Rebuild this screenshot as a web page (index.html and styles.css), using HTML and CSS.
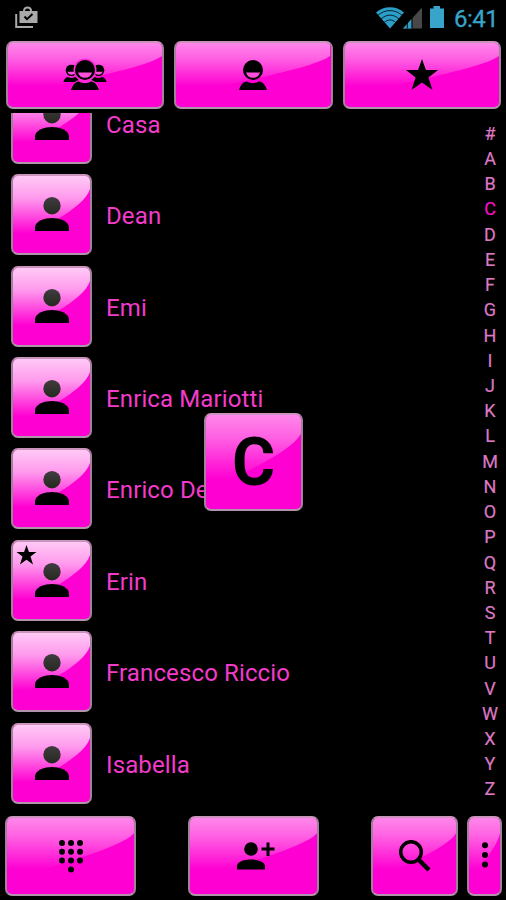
FILE: index.html
```html
<!DOCTYPE html>
<html lang="en">
<head>
<meta charset="utf-8">
<title>Contacts</title>
<link rel="stylesheet" href="styles.css">
</head>
<body>
<svg class="defs" aria-hidden="true">
  <defs>
    <linearGradient id="sheen" x1="0" y1="0" x2="0" y2="1">
      <stop offset="0" stop-color="#fff" stop-opacity=".53"/>
      <stop offset=".3" stop-color="#fff" stop-opacity=".38"/>
      <stop offset=".85" stop-color="#fff" stop-opacity="0"/>
    </linearGradient>
    <linearGradient id="sheen-strong" x1="0" y1="0" x2="0" y2="1">
      <stop offset="0" stop-color="#fff" stop-opacity=".79"/>
      <stop offset=".35" stop-color="#fff" stop-opacity=".6"/>
      <stop offset=".9" stop-color="#fff" stop-opacity="0"/>
    </linearGradient>
    <linearGradient id="head" x1="0" y1="0" x2="0" y2="1">
      <stop offset="0" stop-color="#403c3f"/>
      <stop offset="1" stop-color="#25291f"/>
    </linearGradient>
  </defs>
  <symbol id="gloss" viewBox="0 0 100 100" preserveAspectRatio="none">
    <path fill="url(#sheen)" d="M0 0H100V20C94 31 76 42 60 51C40 62 20 73 0 80Z"/>
  </symbol>
  <symbol id="gloss-strong" viewBox="0 0 100 100" preserveAspectRatio="none">
    <path fill="url(#sheen-strong)" d="M0 0H100V17C96 30 79 43 60 55C40 67 20 76 0 83Z"/>
  </symbol>
  <symbol id="person" viewBox="0 0 34 34">
    <circle cx="17" cy="8.700" r="8.700" fill="url(#head)"/>
    <path d="M0 34V30.500C0 24 10 21 17 21S34 24 34 30.500V34Z"/>
  </symbol>
  <symbol id="star" viewBox="0 0 32 32">
    <path d="M16 0L19.900 11H32L22.400 18.500L26.500 31L16 23.500L5.500 31L9.600 18.500L0 11H12.100Z"/>
  </symbol>
  <symbol id="face" viewBox="0 0 28 31">
    <circle cx="14" cy="10" r="10"/>
    <path class="smile" d="M7 12.500H21C20 16 17.500 17.700 14 17.700S8 16 7 12.500Z"/>
    <path d="M0 30C1.500 25 4 22 8 21.500C11.500 23.700 16.500 23.700 20 21.500C24 22 26.500 25 28 30Z"/>
  </symbol>
</svg>

<div class="screen">
  <header class="status">
    <svg class="status-bag" viewBox="0 0 23 23">
      <path fill="none" stroke="#a9a9a9" stroke-width="2" d="M1.200 8V21H18M9 5C9 .2 16 .2 16 5"/>
      <path fill="#a9a9a9" d="M4.500 5H22.500V17H4.500Z"/>
      <path fill="none" stroke="#000" stroke-width="2" d="M9.500 10.500L12 13.200L17.500 8"/>
    </svg>
    <div class="status-right">
      <svg class="wifi" viewBox="0 0 28 22">
        <path fill="#2b9fc8" d="M0 5.500C8-1.500 20-1.500 28 5.500L14 21.500Z"/>
        <g fill="none" stroke="#00131c" stroke-width=".9"><path d="M2 8.300C9 2 19 2 26 8.300M5 12C11 6.800 17 6.800 23 12M8 15.700C12 12 16 12 20 15.700"/></g>
      </svg>
      <svg class="signal" viewBox="0 0 20 22">
        <path fill="#484848" d="M20 0V22H0Z"/>
        <path fill="#2b9fc8" d="M9 12.100V22H0Z"/>
        <path stroke="#000" d="M4.500 14V22M9.500 8V22"/>
      </svg>
      <svg class="battery" viewBox="0 0 16 22"><path fill="#38a4ca" d="M1 2.500H4.500V0H11V2.500H15V22H1Z"/></svg>
      <span class="clock">6:41</span>
    </div>
  </header>

  <nav class="tabs">
    <button class="key" aria-label="Groups"><svg class="gloss"><use href="#gloss"/></svg>
      <svg class="icon-group" viewBox="0 0 42 31">
        <use href="#face" x="-1" y="4.500" width="17" height="18"/>
        <use href="#face" x="26" y="4.500" width="17" height="18"/>
        <circle class="halo" cx="21" cy="10" r="10"/>
        <path class="halo" d="M9 27C10.500 24 12 22.500 15 21.500H27C30 22.500 31.500 24 33 27Z"/>
        <use href="#face" x="7" y="0" width="28" height="31"/>
      </svg>
    </button>
    <button class="key" aria-label="Contacts"><svg class="gloss"><use href="#gloss"/></svg><svg class="icon-face"><use href="#face"/></svg></button>
    <button class="key" aria-label="Favorites"><svg class="gloss"><use href="#gloss"/></svg><svg class="icon-star"><use href="#star"/></svg></button>
  </nav>

  <main class="content">
    <ul class="list">
      <li class="row"><span class="key thumb"><svg class="gloss"><use href="#gloss-strong"/></svg><svg class="person"><use href="#person"/></svg></span><span class="name">Casa</span></li>
      <li class="row"><span class="key thumb"><svg class="gloss"><use href="#gloss-strong"/></svg><svg class="person"><use href="#person"/></svg></span><span class="name">Dean</span></li>
      <li class="row"><span class="key thumb"><svg class="gloss"><use href="#gloss-strong"/></svg><svg class="person"><use href="#person"/></svg></span><span class="name">Emi</span></li>
      <li class="row"><span class="key thumb"><svg class="gloss"><use href="#gloss-strong"/></svg><svg class="person"><use href="#person"/></svg></span><span class="name">Enrica Mariotti</span></li>
      <li class="row"><span class="key thumb"><svg class="gloss"><use href="#gloss-strong"/></svg><svg class="person"><use href="#person"/></svg></span><span class="name">Enrico De</span></li>
      <li class="row"><span class="key thumb"><svg class="gloss"><use href="#gloss-strong"/></svg><svg class="person"><use href="#person"/></svg><svg class="badge"><use href="#star"/></svg></span><span class="name">Erin</span></li>
      <li class="row"><span class="key thumb"><svg class="gloss"><use href="#gloss-strong"/></svg><svg class="person"><use href="#person"/></svg></span><span class="name">Francesco Riccio</span></li>
      <li class="row"><span class="key thumb"><svg class="gloss"><use href="#gloss-strong"/></svg><svg class="person"><use href="#person"/></svg></span><span class="name">Isabella</span></li>
    </ul>
    <div class="index">
      <span>#</span><span>A</span><span>B</span><span class="current">C</span><span>D</span><span>E</span><span>F</span><span>G</span><span>H</span><span>I</span><span>J</span><span>K</span><span>L</span><span>M</span><span>N</span><span>O</span><span>P</span><span>Q</span><span>R</span><span>S</span><span>T</span><span>U</span><span>V</span><span>W</span><span>X</span><span>Y</span><span>Z</span>
    </div>
    <div class="key popup"><svg class="gloss"><use href="#gloss"/></svg><span class="letter">C</span></div>
  </main>

  <footer class="actions">
    <button class="key wide" aria-label="Dial pad"><svg class="gloss"><use href="#gloss"/></svg>
      <svg class="icon-dial" viewBox="0 0 26 34">
        <circle cx="4" cy="4" r="3"/><circle cx="13" cy="4" r="3"/><circle cx="22" cy="4" r="3"/>
        <circle cx="4" cy="12.800" r="3"/><circle cx="13" cy="12.800" r="3"/><circle cx="22" cy="12.800" r="3"/>
        <circle cx="4" cy="21.600" r="3"/><circle cx="13" cy="21.600" r="3"/><circle cx="22" cy="21.600" r="3"/>
        <circle cx="13" cy="30.500" r="3"/>
      </svg>
    </button>
    <button class="key wide" aria-label="Add contact"><svg class="gloss"><use href="#gloss"/></svg>
      <svg class="icon-add" viewBox="0 0 38 28">
        <circle cx="14" cy="7" r="6.800"/>
        <path d="M0 27.500V24C0 19.500 8 17.500 14 17.500S28 19.500 28 24V27.500ZM29.500 .5H32.500V5.500H37.500V8.500H32.500V14H29.500V8.500H24.500V5.500H29.500Z"/>
      </svg>
    </button>
    <button class="key search" aria-label="Search"><svg class="gloss"><use href="#gloss"/></svg>
      <svg class="icon-search" viewBox="0 0 32 32"><circle cx="12" cy="12" r="10.300"/><path class="handle" d="M19.500 19.500L30 30"/></svg>
    </button>
    <button class="key more" aria-label="More"><svg class="gloss"><use href="#gloss"/></svg>
      <svg class="icon-more" viewBox="0 0 8 26"><circle cx="4" cy="3.300" r="3"/><circle cx="4" cy="13" r="3"/><circle cx="4" cy="22.500" r="3"/></svg>
    </button>
  </footer>
</div>
</body>
</html>
```
FILE: styles.css
```css
* { box-sizing: border-box; }
body { margin: 0; background: #000; font-family: Roboto, "Liberation Sans", sans-serif; }
svg { display: block; }
.defs { position: absolute; width: 0; height: 0; }
.screen { width: 506px; height: 900px; display: flex; flex-direction: column; overflow: hidden; background: #000; }

.status { height: 41px; flex: none; display: flex; justify-content: space-between; padding: 6px 9px 0 15px; }
.status-bag { width: 23px; height: 23px; }
.status-right { display: flex; align-items: flex-start; }
.wifi { width: 28px; height: 22px; margin-top: 1px; }
.signal { width: 19px; height: 22px; margin: 1px 0 0 -1px; }
.battery { width: 16px; height: 22px; margin-left: 7px; }
.clock { width: 43px; margin-left: 9px; font-size: 24px; line-height: 26px; letter-spacing: -.5px; color: #38a4ca; white-space: nowrap; -webkit-text-stroke: .3px; }

.key {
  position: relative;
  display: flex;
  align-items: center;
  justify-content: center;
  padding: 0;
  border: 2px solid;
  border-color: #c993bb #a0829a #b095aa #a0829a;
  border-radius: 7px;
  background: #ff00d2;
  overflow: hidden;
  color: #000;
}
.gloss { position: absolute; inset: 0; width: 100%; height: 100%; }
.key > :not(.gloss) { position: relative; }

.tabs { flex: none; height: 72px; display: flex; gap: 10.500px; padding: 0 4.500px 4px 5.500px; }
.tabs .key { flex: 1; }
.icon-group { width: 42px; height: 31px; overflow: visible; }
.icon-face { width: 28px; height: 31px; }
.icon-star { width: 32px; height: 32px; }
.smile { fill: #ff4fdc; }
.halo { fill: #ff28d6; stroke: #ff28d6; stroke-width: 3; }

.content { position: relative; flex: none; height: 692px; display: flex; justify-content: space-between; overflow: hidden; }
.list { list-style: none; margin: -35.300px 0 0; padding: 0 0 0 11px; }
.row { height: 91.400px; display: flex; align-items: center; gap: 14px; }
.thumb { width: 81px; height: 81px; flex: none; }
.person { width: 34px; height: 34px; margin-top: -1px; }
.thumb .badge { position: absolute; left: 3px; top: 3px; width: 21px; height: 20px; }
.name { color: #f33bcb; font-size: 24px; line-height: 22px; letter-spacing: .12px; margin-top: 3px; white-space: nowrap; }

.index { width: 32px; padding-top: 7.800px; color: #dc78c4; font-size: 18px; text-align: center; }
.index span { display: block; height: 25.220px; line-height: 25.220px; -webkit-text-stroke: .2px; }
.index .current { color: #f50fc2; }

.popup { position: absolute; left: 204px; top: 300px; width: 99px; height: 98px; }
.letter { font-size: 66px; line-height: 76px; font-weight: 700; margin-top: 1px; }

.actions { flex: none; height: 95px; display: flex; align-items: flex-start; padding: 11px 4px 0 5px; }
.actions .key { height: 80px; }
.wide { width: 131px; margin-right: 52px; }
.search { width: 87px; margin-right: 9px; }
.more { width: 35px; }
.icon-dial { width: 26px; height: 34px; }
.icon-add { width: 38px; height: 28px; margin-left: 5px; }
.icon-search { width: 32px; height: 32px; fill: none; stroke: #000; stroke-width: 3.500; }
.handle { stroke-width: 4.500; }
.icon-more { width: 8px; height: 26px; margin-top: -2px; }
```
